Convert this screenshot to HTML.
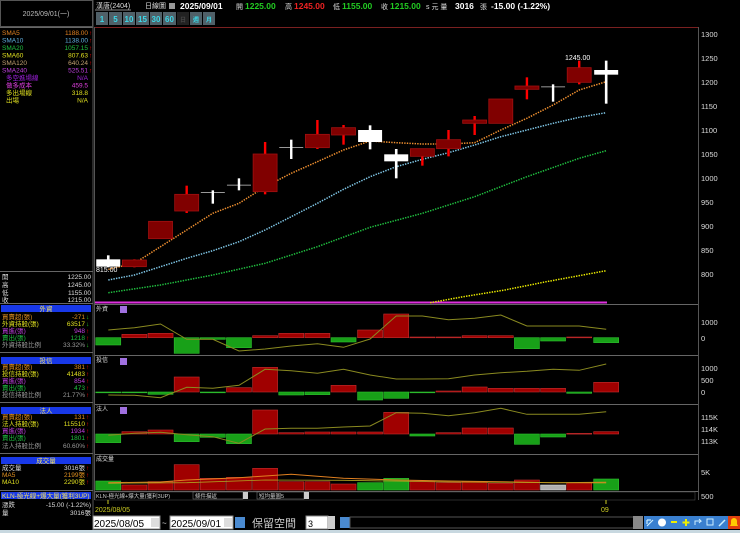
<!DOCTYPE html>
<html><head><meta charset="utf-8"><style>
html,body{margin:0;padding:0;background:#000;width:740px;height:533px;overflow:hidden}
svg{display:block}
text{font-family:"Liberation Sans","Noto Sans CJK TC",sans-serif}
.s{font-size:6.5px}
.b{font-size:8.5px;font-weight:bold}
</style></head><body>
<svg id="c" width="740" height="533" viewBox="0 0 740 533" xmlns="http://www.w3.org/2000/svg">
<rect width="740" height="533" fill="#000"/>
<rect x="0.5" y="0.5" width="92" height="26" fill="none" stroke="#555"/>
<text x="46" y="16" fill="#bbb" font-size="7" text-anchor="middle">2025/09/01(一)</text>
<line x1="0" y1="27.5" x2="93" y2="27.5" stroke="#666"/>
<line x1="93" y1="0" x2="93" y2="533" stroke="#555"/>
<g class="s">
<text x="2" y="35" fill="#e08020">SMA5</text><text x="88" y="35" fill="#e08020" text-anchor="end">1188.00</text>
<text x="2" y="42.5" fill="#60b0e0">SMA10</text><text x="88" y="42.5" fill="#60b0e0" text-anchor="end">1138.00</text>
<text x="2" y="50" fill="#20c040">SMA20</text><text x="88" y="50" fill="#20c040" text-anchor="end">1057.15</text>
<text x="2" y="57.5" fill="#e0e020">SMA60</text><text x="88" y="57.5" fill="#e0e020" text-anchor="end">807.63</text>
<text x="2" y="65" fill="#c0a070">SMA120</text><text x="88" y="65" fill="#c0a070" text-anchor="end">640.24</text>
<text x="2" y="72.5" fill="#c040e0">SMA240</text><text x="88" y="72.5" fill="#c040e0" text-anchor="end">525.51</text>
<text x="6" y="80" fill="#a020e0">多空進場線</text><text x="88" y="80" fill="#a020e0" text-anchor="end">N/A</text>
<text x="6" y="87.5" fill="#e040e0">做多成本</text><text x="88" y="87.5" fill="#e040e0" text-anchor="end">459.5</text>
<text x="6" y="95" fill="#e0e020">多出場線</text><text x="88" y="95" fill="#e0e020" text-anchor="end">318.8</text>
<text x="6" y="102.5" fill="#e0e020">出場</text><text x="88" y="102.5" fill="#e0e020" text-anchor="end">N/A</text>
</g>
<g fill="#f00" font-size="6">
<text x="89" y="35">↑</text><text x="89" y="42.5">↑</text><text x="89" y="50">↑</text><text x="89" y="57.5">↑</text><text x="89" y="65">↑</text><text x="89" y="72.5">↑</text>
</g>
<line x1="0" y1="271.5" x2="93" y2="271.5" stroke="#666"/>
<g class="s" fill="#ddd">
<text x="2" y="279">開</text><text x="91" y="279" text-anchor="end">1225.00</text>
<text x="2" y="287">高</text><text x="91" y="287" text-anchor="end">1245.00</text>
<text x="2" y="295">低</text><text x="91" y="295" text-anchor="end">1155.00</text>
<text x="2" y="302">收</text><text x="91" y="302" text-anchor="end">1215.00</text>
</g>
<line x1="0" y1="303.5" x2="93" y2="303.5" stroke="#666"/>
<rect x="1" y="305" width="90" height="7" fill="#1838e8"/>
<text x="46" y="311" class="s" fill="#f0e060" text-anchor="middle">外資</text>
<g class="s">
<text x="2" y="319" fill="#e09020">買賣超(張)</text><text x="85" y="319" fill="#e09020" text-anchor="end">-271</text><text x="86" y="319" fill="#2c2">↓</text>
<text x="2" y="326" fill="#e0e020">外資持股(張)</text><text x="85" y="326" fill="#e0e020" text-anchor="end">63517</text><text x="86" y="326" fill="#2c2">↓</text>
<text x="2" y="333" fill="#c040e0">買進(張)</text><text x="85" y="333" fill="#c040e0" text-anchor="end">948</text><text x="86" y="333" fill="#f00">↑</text>
<text x="2" y="340" fill="#20c040">賣出(張)</text><text x="85" y="340" fill="#20c040" text-anchor="end">1218</text><text x="86" y="340" fill="#f00">↑</text>
<text x="2" y="347" fill="#999">外資持股比例</text><text x="85" y="347" fill="#999" text-anchor="end">33.32%</text><text x="86" y="347" fill="#2c2">↓</text>
</g>
<line x1="0" y1="352.5" x2="93" y2="352.5" stroke="#666"/>
<rect x="1" y="357" width="90" height="7" fill="#1838e8"/>
<text x="46" y="363" class="s" fill="#f0e060" text-anchor="middle">投信</text>
<g class="s">
<text x="2" y="369" fill="#e09020">買賣超(張)</text><text x="85" y="369" fill="#e09020" text-anchor="end">381</text>
<text x="2" y="376" fill="#e0e020">投信持股(張)</text><text x="85" y="376" fill="#e0e020" text-anchor="end">41483</text>
<text x="2" y="383" fill="#c040e0">買進(張)</text><text x="85" y="383" fill="#c040e0" text-anchor="end">854</text>
<text x="2" y="390" fill="#20c040">賣出(張)</text><text x="85" y="390" fill="#20c040" text-anchor="end">473</text>
<text x="2" y="397" fill="#999">投信持股比例</text><text x="85" y="397" fill="#999" text-anchor="end">21.77%</text>
</g>
<g fill="#f00" font-size="6"><text x="86" y="369">↑</text><text x="86" y="376">↑</text><text x="86" y="383">↑</text><text x="86" y="390">↑</text><text x="86" y="397">↑</text></g>
<line x1="0" y1="402.5" x2="93" y2="402.5" stroke="#666"/>
<rect x="1" y="407" width="90" height="7" fill="#1838e8"/>
<text x="46" y="413" class="s" fill="#f0e060" text-anchor="middle">法人</text>
<g class="s">
<text x="2" y="419" fill="#e09020">買賣超(張)</text><text x="85" y="419" fill="#e09020" text-anchor="end">131</text>
<text x="2" y="426" fill="#e0e020">法人持股(張)</text><text x="85" y="426" fill="#e0e020" text-anchor="end">115510</text>
<text x="2" y="433" fill="#c040e0">買進(張)</text><text x="85" y="433" fill="#c040e0" text-anchor="end">1934</text>
<text x="2" y="440" fill="#20c040">賣出(張)</text><text x="85" y="440" fill="#20c040" text-anchor="end">1801</text>
<text x="2" y="448" fill="#999">法人持股比例</text><text x="85" y="448" fill="#999" text-anchor="end">60.60%</text>
</g>
<g fill="#f00" font-size="6"><text x="86" y="419">↑</text><text x="86" y="426">↑</text><text x="86" y="433">↑</text><text x="86" y="440">↑</text><text x="86" y="448">↑</text></g>
<line x1="0" y1="453.5" x2="93" y2="453.5" stroke="#666"/>
<rect x="1" y="457" width="90" height="7" fill="#1838e8"/>
<text x="46" y="463" class="s" fill="#f0e060" text-anchor="middle">成交量</text>
<g class="s">
<text x="2" y="470" fill="#ddd">成交量</text><text x="85" y="470" fill="#ddd" text-anchor="end">3016張</text>
<text x="2" y="477" fill="#e09020">MA5</text><text x="85" y="477" fill="#e09020" text-anchor="end">2199張</text>
<text x="2" y="484" fill="#e0e020">MA10</text><text x="85" y="484" fill="#e0e020" text-anchor="end">2290張</text>
</g>
<g fill="#f00" font-size="6"><text x="86" y="470">↑</text><text x="86" y="477">↑</text><text x="86" y="484">↑</text></g>
<line x1="0" y1="490.5" x2="93" y2="490.5" stroke="#666"/>
<rect x="1" y="492" width="90" height="7" fill="#1838e8"/>
<text x="2" y="498" class="s" fill="#f0e060" font-size="6">KLN-極光線+爆大量(獲利3UP)</text>
<g class="s" fill="#ddd">
<text x="2" y="507">漲跌</text><text x="91" y="507" text-anchor="end">-15.00 (-1.22%)</text>
<text x="2" y="515">量</text><text x="91" y="515" text-anchor="end">3016張</text>
</g>

<text x="96" y="8" font-size="7" fill="#ddd">漢唐(2404)</text>
<line x1="95" y1="10" x2="131" y2="10" stroke="#888"/>
<text x="145" y="8" font-size="7" fill="#ddd">日線圖</text>
<rect x="169" y="3" width="6" height="6" fill="#999"/>
<text x="180" y="9" class="b" fill="#fff">2025/09/01</text>
<text x="236" y="9" font-size="7" fill="#ddd">開</text>
<text x="245" y="9" class="b" fill="#2c2">1225.00</text>
<text x="285" y="9" font-size="7" fill="#ddd">高</text>
<text x="294" y="9" class="b" fill="#e22">1245.00</text>
<text x="333" y="9" font-size="7" fill="#ddd">低</text>
<text x="342" y="9" class="b" fill="#2c2">1155.00</text>
<text x="381" y="9" font-size="7" fill="#ddd">收</text>
<text x="390" y="9" class="b" fill="#2c2">1215.00</text>
<text x="426" y="9" font-size="7" fill="#ddd">s 元  量</text>
<text x="455" y="9" class="b" fill="#fff">3016</text>
<text x="480" y="9" font-size="7" fill="#ddd">張</text>
<text x="491" y="9" class="b" fill="#fff">-15.00 (-1.22%)</text>
<g font-size="8" font-weight="bold" fill="#3cd8e8" text-anchor="middle">
<rect x="96" y="12" width="12" height="13" fill="#506068"/><text x="102" y="22">1</text>
<rect x="109" y="12" width="13" height="13" fill="#506068"/><text x="115.5" y="22">5</text>
<rect x="123" y="12" width="12" height="13" fill="#506068"/><text x="129" y="22">10</text>
<rect x="136" y="12" width="13" height="13" fill="#506068"/><text x="142.5" y="22">15</text>
<rect x="150" y="12" width="12" height="13" fill="#506068"/><text x="156" y="22">30</text>
<rect x="163" y="12" width="13" height="13" fill="#506068"/><text x="169.5" y="22">60</text>
<rect x="177" y="12" width="12" height="13" fill="#222"/><text x="183" y="22" fill="#444" font-size="6">日</text>
<rect x="190" y="12" width="12" height="13" fill="#506068"/><text x="196" y="22" font-size="6">週</text>
<rect x="203" y="12" width="12" height="13" fill="#506068"/><text x="209" y="22" font-size="6">月</text>
</g>
<line x1="95" y1="27.5" x2="698" y2="27.5" stroke="#7a2020"/>
<line x1="698.5" y1="27" x2="698.5" y2="500" stroke="#555"/>
<line x1="94.5" y1="27" x2="94.5" y2="500" stroke="#555"/>
<g font-size="7.5" fill="#ddd">
<text x="701" y="37">1300</text><text x="701" y="61">1250</text><text x="701" y="85">1200</text><text x="701" y="109">1150</text>
<text x="701" y="133">1100</text><text x="701" y="157">1050</text><text x="701" y="181">1000</text><text x="701" y="205">950</text>
<text x="701" y="229">900</text><text x="701" y="253">850</text><text x="701" y="277">800</text>
<text x="701" y="325">1000</text><text x="701" y="341">0</text>
<text x="701" y="371">1000</text><text x="701" y="383">500</text><text x="701" y="395">0</text>
<text x="701" y="420">115K</text><text x="701" y="432">114K</text><text x="701" y="444">113K</text>
<text x="701" y="475">5K</text><text x="701" y="499">500</text>
</g>
<text x="565" y="60" font-size="7" fill="#fff">1245.00</text>
<g stroke="#666">
<line x1="95" y1="304.5" x2="698" y2="304.5"/><line x1="95" y1="355.5" x2="698" y2="355.5"/>
<line x1="95" y1="404.5" x2="698" y2="404.5"/><line x1="95" y1="454.5" x2="698" y2="454.5"/>
<line x1="95" y1="491.5" x2="698" y2="491.5"/>
</g>
<g font-size="6" fill="#ddd"><text x="96" y="311">外資</text><text x="96" y="362">投信</text><text x="96" y="411">法人</text><text x="96" y="461">成交量</text></g>
<g fill="#a070e0"><rect x="120" y="306" width="7" height="7"/><rect x="120" y="358" width="7" height="7"/><rect x="120" y="407" width="7" height="7"/></g>
<line x1="95" y1="302.5" x2="607" y2="302.5" stroke="#e030e0" stroke-width="2"/>
<g id="dyn"></g>
<text x="96" y="272" font-size="7" fill="#fff">815.00</text>
<rect x="95" y="492" width="600" height="8" fill="#000" stroke="#555" stroke-width="0.5"/>
<text x="96" y="498" font-size="5.5" fill="#ccc">KLN-極光線+爆大量(獲利3UP)</text>
<rect x="193" y="492" width="50" height="7" fill="#000" stroke="#888" stroke-width="0.5"/><text x="195" y="498" font-size="5.5" fill="#ccc">條件描述</text>
<rect x="243" y="492" width="5" height="7" fill="#ccc"/>
<rect x="257" y="492" width="47" height="7" fill="#000" stroke="#888" stroke-width="0.5"/><text x="259" y="498" font-size="5.5" fill="#ccc">短均量圖5</text>
<rect x="304" y="492" width="5" height="7" fill="#ccc"/>
<line x1="108" y1="500" x2="108" y2="504" stroke="#cc2"/><line x1="606" y1="500" x2="606" y2="504" stroke="#cc2"/>
<text x="95" y="512" font-size="7" fill="#cc2">2025/08/05</text>
<text x="601" y="512" font-size="7" fill="#cc2">09</text>
<rect x="93" y="516" width="67" height="13" fill="#fff" stroke="#888"/><text x="94" y="527" font-size="10" fill="#000">2025/08/05</text>
<rect x="151" y="518" width="8" height="9" fill="#ddd"/>
<text x="162" y="526" font-size="8" fill="#ddd">~</text>
<rect x="170" y="516" width="63" height="13" fill="#fff" stroke="#888"/><text x="171" y="527" font-size="10" fill="#000">2025/09/01</text>
<rect x="224" y="518" width="8" height="9" fill="#ddd"/>
<rect x="235" y="517" width="10" height="11" fill="#4a8ad0"/>
<text x="252" y="527" font-size="11" fill="#ccc">保留空間</text>
<rect x="306" y="516" width="22" height="13" fill="#fff" stroke="#888"/><text x="308" y="527" font-size="9" fill="#000">3</text>
<rect x="328" y="516" width="7" height="13" fill="#ccc"/>
<rect x="340" y="517" width="10" height="11" fill="#4a8ad0"/>
<rect x="350" y="517" width="292" height="11" fill="#000" stroke="#555"/>
<rect x="633" y="516" width="10" height="13" fill="#888"/>
<g fill="#3a80d0"><rect x="644" y="516" width="12" height="13"/><rect x="656" y="516" width="12" height="13"/><rect x="668" y="516" width="12" height="13"/><rect x="680" y="516" width="12" height="13"/><rect x="692" y="516" width="12" height="13"/><rect x="704" y="516" width="12" height="13"/><rect x="716" y="516" width="12" height="13"/></g>
<path d="M647 526l6-6M647 520h4M647 520v4" stroke="#cef" stroke-width="1.2" fill="none"/>
<circle cx="662" cy="522.5" r="4" fill="#fff"/><rect x="671" y="521" width="6" height="2" fill="#ee0"/><path d="M686 519v7M682.5 522.5h7" stroke="#ee0" stroke-width="2"/>
<path d="M695 525v-4h6l-2-2M701 521l-2 2" stroke="#cef" fill="none"/><rect x="707" y="519" width="6" height="6" fill="none" stroke="#cef"/><path d="M719 526l6-6" stroke="#cef" stroke-width="1.5"/>
<rect x="728" y="516" width="12" height="13" fill="#e04010"/><path d="M730 526h8l-1-2v-3a3 3 0 0 0-6 0v3z" fill="#fc0"/>
<rect x="0" y="530" width="740" height="3" fill="#c8d8e0"/>
</svg>
<script>
var NS="http://www.w3.org/2000/svg",g=document.getElementById("dyn");
function el(t,a){var e=document.createElementNS(NS,t);for(var k in a)e.setAttribute(k,a[k]);g.appendChild(e);return e;}
var zx=[44,107,170,233,296,359,422,485,548,611,675,738,801,864,927,990,1053,1116,1179,1244];
function X(i){return 90+zx[i]/2.41;}
function Y(z){return 30+z/3;}
function Y2(z){return 300+z/3;}
function line(pts,f,col,dash,w){el("polyline",{points:pts.map(function(p){return (90+p[0]/2.41).toFixed(1)+","+f(p[1]).toFixed(1)}).join(" "),fill:"none",stroke:col,"stroke-width":w||1.2,"stroke-dasharray":dash||""});}
line([[820,818],[900,800],[1000,780],[1100,755],[1244,722]],Y,"#ee0","1.4 1.2",1.5);
line([[44,788],[170,765],[296,735],[422,700],[548,650],[675,592],[801,550],[927,500],[1053,440],[1179,385],[1244,362]],Y,"#20c040","1.4 1.2",1.5);
line([[44,750],[107,735],[170,710],[233,685],[296,662],[359,635],[422,600],[485,560],[548,520],[611,478],[675,440],[738,410],[801,388],[864,368],[927,345],[990,320],[1053,300],[1116,280],[1179,262],[1244,248]],Y,"#80c8e8","1.4 1.2",1.5);
line([[44,718],[107,700],[170,650],[233,600],[296,550],[359,520],[422,470],[485,430],[548,395],[611,360],[675,333],[738,338],[801,342],[864,342],[927,338],[990,300],[1053,265],[1116,225],[1179,180],[1244,155]],Y,"#f09030","1.4 1.2",1.5);
var C=[[688,710,676,712,"w"],[690,710,688,712,"r"],[574,626,574,626,"r"],[493,543,467,549,"r"],[486,490,481,521,"c"],[464,467,445,481,"c"],[372,485,336,493,"r"],[351,353,329,387,"c"],[313,353,270,357,"r"],[293,315,285,344,"r"],[300,336,286,358,"w"],[373,394,357,445,"w"],[356,379,356,407,"r"],[329,356,300,379,"r"],[270,280,258,315,"r"],[207,280,207,280,"r"],[168,178,142,208,"r"],[169,171,163,215,"c"],[113,157,92,163,"r"],[120,134,92,221,"w"]];
C.forEach(function(c,i){var x=X(i),t=Y(c[0]),b=Y(c[1]),wt=Y(c[2]),wb=Y(c[3]);
 if(c[4]=="r"){el("rect",{x:x-1.2,y:wt,width:2.4,height:wb-wt,fill:"#f00"});el("rect",{x:x-12,y:t,width:24,height:Math.max(b-t,2),fill:"#800000",stroke:"#a01010","stroke-width":0.8});}
 else if(c[4]=="w"){el("rect",{x:x-1.3,y:wt,width:2.6,height:wb-wt,fill:"#fff"});el("rect",{x:x-12,y:t,width:24,height:b-t,fill:"#fff"});}
 else{el("rect",{x:x-12,y:t,width:24,height:1,fill:"#999"});el("rect",{x:x-1.2,y:wt,width:2.4,height:wb-wt,fill:"#fff"});}
});
function bars(arr,base,f){arr.forEach(function(v,i){var x=X(i),a=f(Math.min(v,base)),b=f(Math.max(v,base));var red=v<base;
 el("rect",{x:x-12.5,y:a,width:25,height:Math.max(b-a,0.8),fill:red?"#a00000":"#18a018",stroke:red?"#c03030":"#30c030","stroke-width":0.6});});}
bars([135,103,100,160,118,143,107,100,100,126,90,42,111,111,107,107,146,123,111,128],113,Y2);
line([[44,90],[107,83],[170,72],[233,118],[296,118],[359,153],[422,147],[485,138],[548,131],[611,142],[675,117],[738,48],[801,48],[864,59],[927,55],[990,45],[1053,78],[1116,78],[1179,78],[1244,88]],Y2,"#8a8a20","",1);
bars([277,277,283,231,278,263,202,285,284,256,300,295,278,273,261,265,265,265,280,247],276,Y2);
line([[44,285],[107,286],[170,293],[233,262],[296,265],[359,256],[422,208],[485,212],[548,220],[611,208],[675,225],[738,237],[801,237],[864,236],[927,225],[990,218],[1053,214],[1116,208],[1179,211],[1244,192]],Y2,"#8a8a20","",1);
bars([428,395,390,425,412,431,330,398,396,396,396,337,408,398,384,384,433,411,400,395],402,Y2);
line([[44,406],[107,400],[170,397],[233,404],[296,410],[359,430],[422,387],[485,385],[548,385],[611,381],[675,378],[738,338],[801,340],[864,347],[927,338],[990,325],[1053,343],[1116,343],[1179,343],[1244,335]],Y2,"#8a8a20","",1);
var vol=[543,555,545,494,535,532,505,545,545,552,548,535,543,548,545,550,540,555,548,537],vc="grrrrrrrrrggrrrrrwrg";
vol.forEach(function(v,i){var x=X(i),t=Y2(v),b=Y2(570),k=vc[i];el("rect",{x:x-12.5,y:t,width:25,height:b-t,fill:k=="r"?"#a00000":k=="g"?"#18a018":"#b0b0b0",stroke:k=="r"?"#c03030":k=="g"?"#30c030":"#ddd","stroke-width":0.6});});
line([[44,548],[170,546],[233,540],[359,533],[485,523],[611,535],[738,540],[864,543],[990,545],[1116,548],[1244,547]],Y2,"#e08020","",1);
line([[44,550],[233,548],[422,540],[611,541],[864,546],[1244,549]],Y2,"#b0a020","",0.8);
</script>
</body></html>
